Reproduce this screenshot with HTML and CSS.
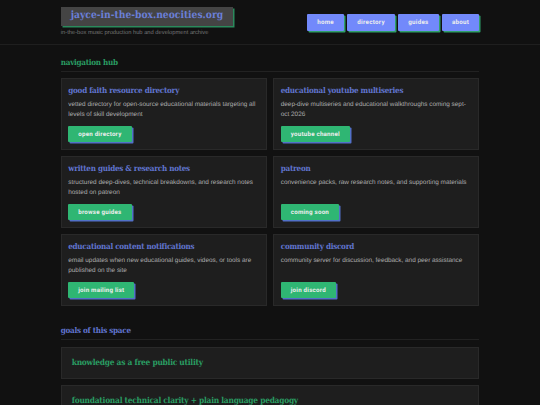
FILE: index.html
```html
<!DOCTYPE html>
<html lang="en">
  <head>
    <meta charset="utf-8" />
    <title>jayce-in-the-box.neocities.org</title>
    <link rel="stylesheet" href="styles.css">
  </head>

  <body>
    <header class="site-header">
      <div class="wrap header-row">
        <div class="brand">
          <h1 class="site-title">jayce-in-the-box.neocities.org</h1>
          <p class="tagline">in-the-box music production hub and development archive</p>
        </div>
        <nav class="nav">
          <a class="nav-link" href="#">home</a>
          <a class="nav-link" href="#">directory</a>
          <a class="nav-link" href="#">guides</a>
          <a class="nav-link" href="#">about</a>
        </nav>
      </div>
    </header>

    <main class="wrap">
      <h2 class="section-title green">navigation hub</h2>
      <div class="cards">
        <section class="card">
          <h3>good faith resource directory</h3>
          <p>vetted directory for open-source educational materials targeting all levels of skill development</p>
          <a class="btn" href="#">open directory</a>
        </section>
        <section class="card">
          <h3>educational youtube multiseries</h3>
          <p>deep-dive multiseries and educational walkthroughs coming sept-oct 2026</p>
          <a class="btn" href="#">youtube channel</a>
        </section>
        <section class="card">
          <h3>written guides &amp; research notes</h3>
          <p>structured deep-dives, technical breakdowns, and research notes hosted on patreon</p>
          <a class="btn" href="#">browse guides</a>
        </section>
        <section class="card">
          <h3>patreon</h3>
          <p>convenience packs, raw research notes, and supporting materials</p>
          <a class="btn" href="#">coming soon</a>
        </section>
        <section class="card">
          <h3>educational content notifications</h3>
          <p>email updates when new educational guides, videos, or tools are published on the site</p>
          <a class="btn" href="#">join mailing list</a>
        </section>
        <section class="card">
          <h3>community discord</h3>
          <p>community server for discussion, feedback, and peer assistance</p>
          <a class="btn" href="#">join discord</a>
        </section>
      </div>

      <h2 class="section-title blue goals-title">goals of this space</h2>
      <div class="goals">
        <div class="goal">knowledge as a free public utility</div>
        <div class="goal">foundational technical clarity + plain language pedagogy</div>
      </div>
    </main>
  </body>
</html>
```

FILE: styles.css
```css
* {
  box-sizing: border-box;
}

html,
body {
  height: 405px;
  overflow: hidden;
}

body {
  margin: 0;
  background: #111;
  color: #adadad;
  font-family: "Liberation Sans", Arial, sans-serif;
  font-size: 6.4px;
  text-rendering: geometricPrecision;
}

.wrap {
  width: 418.5px;
  margin: 0 auto;
}

.site-header {
  height: 45px;
  border-bottom: 1px solid #1f1f1f;
}

.header-row {
  display: flex;
  justify-content: space-between;
  align-items: flex-start;
  padding-top: 7px;
}

.site-title {
  display: inline-block;
  margin: 0;
  padding: 0 10px;
  height: 18.5px;
  background: #444;
  box-shadow: 1.5px 1.5px 0 #2a8a5c;
  color: #6b7fd7;
  font-family: "DejaVu Serif Condensed", "DejaVu Serif", serif;
  font-size: 10.2px;
  font-weight: 700;
  line-height: 17px;
}

.tagline {
  margin: 3.5px 0 0;
  color: #777;
  font-size: 5.75px;
  line-height: 8px;
}

.nav {
  display: flex;
  gap: 3.3px;
  padding-top: 7px;
}

.nav-link {
  height: 16.5px;
  padding: 0 10px;
  background: #7289fb;
  box-shadow: 1.5px 1.5px 0 #2fa06a;
  border-radius: 1px;
  color: #eee;
  font-family: Roboto, sans-serif;
  font-size: 6.2px;
  font-weight: 700;
  letter-spacing: 0.3px;
  line-height: 16.5px;
  text-decoration: none;
}

.section-title {
  margin: 0;
  padding-bottom: 3px;
  border-bottom: 1px solid #222;
  font-family: "DejaVu Serif Condensed", "DejaVu Serif", serif;
  font-size: 8px;
  font-weight: 700;
  letter-spacing: -0.25px;
  line-height: 12px;
}

.section-title.green {
  margin-top: 11px;
  color: #2a9d63;
}

.section-title.blue {
  color: #6175cf;
}

.goals-title {
  margin-top: 18.5px;
}

.cards {
  display: grid;
  grid-template-columns: 206px 206px;
  gap: 6.5px;
  margin-top: 6px;
}

.card {
  display: flex;
  flex-direction: column;
  align-items: flex-start;
  height: 71.5px;
  padding: 5px 6.5px 6.5px;
  background: #1e1e1e;
  border: 1px solid #292929;
}

.card h3 {
  margin: 0 0 3.5px;
  color: #6175cf;
  font-family: "DejaVu Serif Condensed", "DejaVu Serif", serif;
  font-size: 8px;
  font-weight: 700;
  letter-spacing: -0.25px;
  line-height: 12px;
}

.card p {
  flex: 1;
  margin: 0;
  line-height: 10px;
}

.btn {
  height: 16.5px;
  padding: 0 10px;
  background: #2fb673;
  box-shadow: 1.5px 1.5px 0 #5270c8;
  border-radius: 1px;
  color: #eee;
  font-family: Roboto, sans-serif;
  font-size: 6.2px;
  font-weight: 700;
  letter-spacing: 0.22px;
  line-height: 16.5px;
  text-decoration: none;
}

.goals {
  display: flex;
  flex-direction: column;
  gap: 6.5px;
  margin-top: 6.5px;
}

.goal {
  height: 32px;
  padding: 0 10px;
  background: #1e1e1e;
  border: 1px solid #292929;
  color: #2a9d63;
  font-family: "DejaVu Serif Condensed", "DejaVu Serif", serif;
  font-size: 8.3px;
  font-weight: 700;
  letter-spacing: -0.25px;
  line-height: 29px;
}
```
